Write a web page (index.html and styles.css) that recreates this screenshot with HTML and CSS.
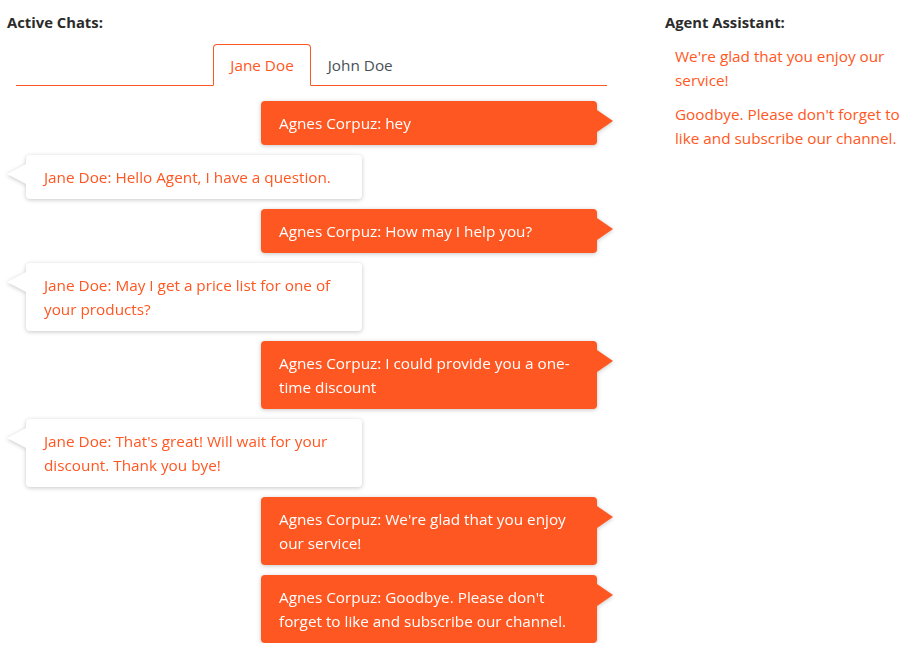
FILE: index.html
```html
<!DOCTYPE html>
<html>
<head>
<meta charset="utf-8">
<link rel="stylesheet" href="styles.css">
</head>
<body>
<div class="page">
  <div class="left">
    <div class="heading">Active Chats:</div>
    <div class="chat">
      <div class="tabs">
        <div class="tab active">Jane Doe</div>
        <div class="tab">John Doe</div>
      </div>
      <div class="messages">
        <div class="msg out">Agnes Corpuz: hey</div>
        <div class="msg in">Jane Doe: Hello Agent, I have a question.</div>
        <div class="msg out">Agnes Corpuz: How may I help you?</div>
        <div class="msg in">Jane Doe: May I get a price list for one of your products?</div>
        <div class="msg out">Agnes Corpuz: I could provide you a one-time discount</div>
        <div class="msg in">Jane Doe: That's great! Will wait for your discount. Thank you bye!</div>
        <div class="msg out">Agnes Corpuz: We're glad that you enjoy our service!</div>
        <div class="msg out">Agnes Corpuz: Goodbye. Please don't forget to like and subscribe our channel.</div>
      </div>
    </div>
  </div>
  <div class="right">
    <div class="heading">Agent Assistant:</div>
    <div class="suggestions">
      <div class="suggestion">We're glad that you enjoy our service!</div>
      <div class="suggestion">Goodbye. Please don't forget to like and subscribe our channel.</div>
    </div>
  </div>
</div>
</body>
</html>
```
FILE: styles.css
```css
* { box-sizing: border-box; }
body {
  margin: 0;
  font-family: "Open Sans", "Noto Sans", sans-serif;
  font-size: 15.3px;
  line-height: 24px;
  color: #212529;
  background: #fff;
}
.page {
  display: flex;
  align-items: flex-start;
}
.left {
  width: 620px;
  padding-top: 10px;
}
.heading {
  font-weight: bold;
  font-size: 14.8px;
  line-height: 24px;
  color: #2b2b2b;
  margin-bottom: 10px;
}
.left .heading { padding-left: 7px; }
.chat {
  margin-left: 16px;
  width: 591px;
}
.tabs {
  display: flex;
  justify-content: center;
  border-bottom: 1px solid #ff5722;
}
.tab {
  padding: 8px 16px;
  border: 1px solid transparent;
  border-top-left-radius: 4px;
  border-top-right-radius: 4px;
  margin-bottom: -1px;
  color: #495057;
}
.tab.active {
  color: #ff5722;
  border-color: #ff5722 #ff5722 #fff;
  background: #fff;
}
.messages {
  display: flex;
  flex-direction: column;
  gap: 10px;
  padding: 15px 10px 0;
}
.msg {
  position: relative;
  width: 336px;
  padding: 10px 18px;
  border-radius: 4px;
  filter: drop-shadow(0 1px 2px rgba(0,0,0,0.22));
}
.msg.out {
  align-self: flex-end;
  background: #ff5722;
  color: #fff;
}
.msg.out::after {
  content: "";
  position: absolute;
  left: 100%;
  top: 9px;
  border-left: 16px solid #ff5722;
  border-top: 11px solid transparent;
  border-bottom: 11px solid transparent;
}
.msg.in {
  align-self: flex-start;
  background: #fff;
  color: #ff5722;
}
.msg.in::after {
  content: "";
  position: absolute;
  right: 100%;
  top: 9px;
  border-right: 19px solid #fff;
  border-top: 10px solid transparent;
  border-bottom: 10px solid transparent;
}
.right {
  flex: 1;
  padding-left: 45px;
  padding-top: 10px;
}
.suggestions {
  display: flex;
  flex-direction: column;
  gap: 10px;
  padding-left: 10px;
}
.suggestion {
  color: #ff5722;
}
```
